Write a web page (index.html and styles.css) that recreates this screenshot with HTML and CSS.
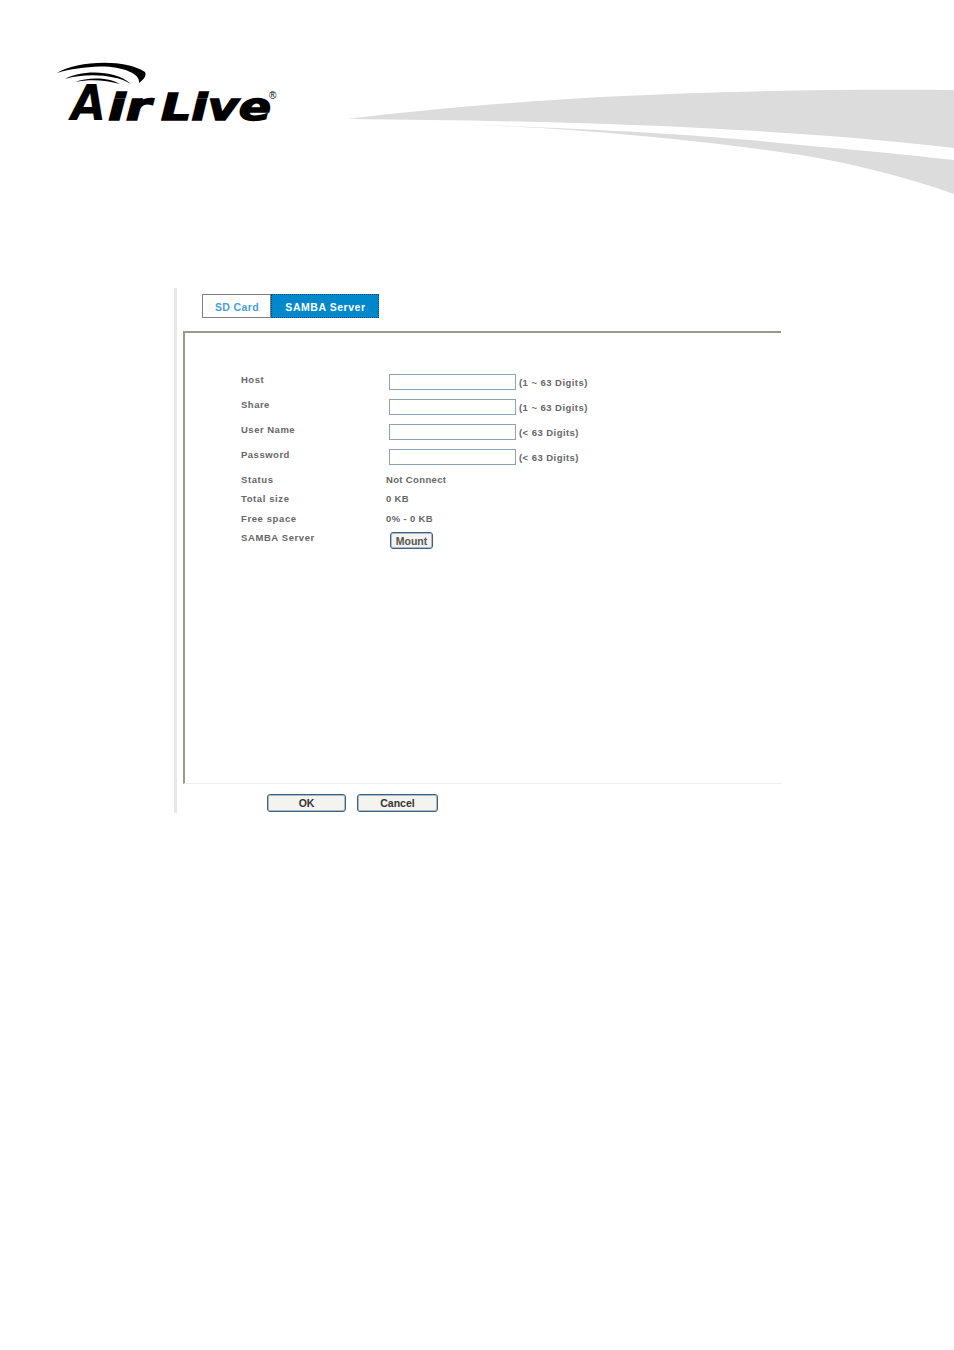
FILE: index.html
```html
<!DOCTYPE html>
<html lang="en">

<head>
    <meta charset="utf-8">
    <title>SAMBA Server</title>
    <link rel="stylesheet" href="styles.css">
</head>

<body>

    <div class="header">
        <svg class="logo" width="230" height="84" viewBox="52 58 230 84">
            <path d="M57 73 C75 61 125 58 145 72 C147 76 143 80 139 83 C141 73 120 66 100 66.500 C85 67 70 69 57 73 Z" />
            <path d="M65 79 C80 70 115 69 131 84 C115 74 85 73 65 79 Z" />
            <path d="M75 82 C88 77 108 77 120 84 C106 80 90 79 75 82 Z" />
            <text class="logo-a" x="71" y="120" textLength="35" lengthAdjust="spacingAndGlyphs">A</text>
            <text class="logo-text" x="108" y="120" textLength="43" lengthAdjust="spacingAndGlyphs">ir</text>
            <text class="logo-text" x="161" y="120" textLength="110" lengthAdjust="spacingAndGlyphs">Live</text>
            <text class="logo-reg" x="269" y="99">®</text>
        </svg>
        <svg class="swoosh" width="609" height="110" viewBox="345 86 609 110">
            <path d="M347 119 C420 110 500 103 600 97 C720 91 840 89 954 90 L954 148 C880 139 800 133 700 128 C600 123 480 120 347 119 Z" />
            <path d="M480 125 C600 129 720 136 800 145 C860 150 910 155 954 160 L954 194 C900 175 840 160 780 152 C700 141 600 130 480 125 Z" />
        </svg>
    </div>

    <div class="shot">
        <div class="tabs">
            <div class="tab">SD Card</div>
            <div class="tab tab-on">SAMBA Server</div>
        </div>

        <div class="panel">
            <div class="row">
                <span class="label">Host</span>
                <input class="box" type="text">
                <span class="hint">(1 ~ 63 Digits)</span>
            </div>
            <div class="row">
                <span class="label">Share</span>
                <input class="box" type="text">
                <span class="hint">(1 ~ 63 Digits)</span>
            </div>
            <div class="row">
                <span class="label">User Name</span>
                <input class="box" type="text">
                <span class="hint">(&lt; 63 Digits)</span>
            </div>
            <div class="row">
                <span class="label">Password</span>
                <input class="box" type="text">
                <span class="hint">(&lt; 63 Digits)</span>
            </div>
            <div class="row row-small">
                <span class="label">Status</span>
                <span class="value">Not Connect</span>
            </div>
            <div class="row row-small">
                <span class="label">Total size</span>
                <span class="value">0 KB</span>
            </div>
            <div class="row row-small">
                <span class="label">Free space</span>
                <span class="value">0% - 0 KB</span>
            </div>
            <div class="row row-small">
                <span class="label">SAMBA Server</span>
                <button class="btn btn-mount">Mount</button>
            </div>
        </div>

        <div class="actions">
            <button class="btn btn-ok">OK</button>
            <button class="btn btn-cancel">Cancel</button>
        </div>
    </div>

</body>

</html>
```

FILE: styles.css
```css
body {
    margin: 0;
    background-color: white;
    font-family: "Liberation Sans", Arial, sans-serif;
}

.header {
    height: 288px;
    display: flex;
    justify-content: space-between;
    align-items: flex-start;
}

.logo {
    margin-top: 58px;
    margin-left: 52px;
}

.logo-a {
    font-family: "DejaVu Sans", sans-serif;
    font-weight: 700;
    font-style: italic;
    font-size: 50px;
}

.logo-text {
    font-family: "DejaVu Sans", sans-serif;
    font-weight: 700;
    font-style: italic;
    font-size: 38px;
    stroke: black;
    stroke-width: 1.5px;
}

.logo-reg {
    font-family: "Liberation Sans", sans-serif;
    font-size: 10px;
}

.swoosh {
    margin-top: 86px;
    fill: #dcdcdc;
}

.shot {
    margin-left: 174px;
    width: 607px;
    height: 525px;
    border-left: 3px solid #e8e8e8;
    box-sizing: border-box;
    display: flex;
    flex-direction: column;
}

.tabs {
    display: flex;
    margin-top: 6px;
    margin-left: 25px;
    height: 24px;
}

.tab {
    width: 69px;
    box-sizing: border-box;
    border: 1px solid #808080;
    padding-left: 1px;
    font-size: 10.5px;
    font-weight: 700;
    letter-spacing: 0.4px;
    line-height: 24px;
    text-align: center;
    color: #4a9fd8;
}

.tab-on {
    width: 108px;
    border: 1px dotted #0b4a70;
    background-color: #0088cc;
    letter-spacing: 0.55px;
    color: white;
}

.panel {
    margin-top: 13px;
    margin-left: 6px;
    height: 453px;
    box-sizing: border-box;
    border-top: 2px solid #9a9a8c;
    border-left: 2px solid #9a9a8c;
    border-bottom: 1px solid #eeeeea;
    padding-top: 36px;
    padding-left: 56px;
}

.row {
    display: flex;
    align-items: center;
    height: 25px;
    font-size: 9.5px;
    letter-spacing: 0.5px;
    color: #666666;
    font-weight: 700;
}

.row-small {
    height: 19.3px;
}

.label {
    width: 145px;
    flex-shrink: 0;
    padding-bottom: 5px;
}

.row-small .label {
    padding-bottom: 0;
    padding-top: 2px;
    letter-spacing: 0.6px;
}

.value {
    padding-top: 2px;
    letter-spacing: 0.35px;
}

.box {
    width: 127px;
    height: 16px;
    margin: 0 0 0 3px;
    padding: 0;
    box-sizing: border-box;
    border: 1px solid #8aa3b8;
    background-color: white;
}

.hint {
    margin-left: 3px;
    padding-top: 2px;
    letter-spacing: 0.45px;
}

.btn {
    padding: 0;
    box-sizing: border-box;
    border: 1px solid #3d6080;
    border-radius: 3px;
    box-shadow: inset 0 0 0 1px #a9bccb;
    background-color: #f4f3ee;
    font-family: "Liberation Sans", Arial, sans-serif;
    font-weight: 700;
    color: #333333;
}

.btn-mount {
    width: 43px;
    height: 17px;
    margin-left: 4px;
    margin-top: 8px;
    font-size: 10.5px;
    color: #555555;
}

.actions {
    display: flex;
    gap: 11px;
    margin-top: 10px;
    padding-left: 90px;
}

.btn-ok,
.btn-cancel {
    height: 18px;
    font-size: 10.5px;
}

.btn-ok {
    width: 79px;
}

.btn-cancel {
    width: 81px;
}
```
